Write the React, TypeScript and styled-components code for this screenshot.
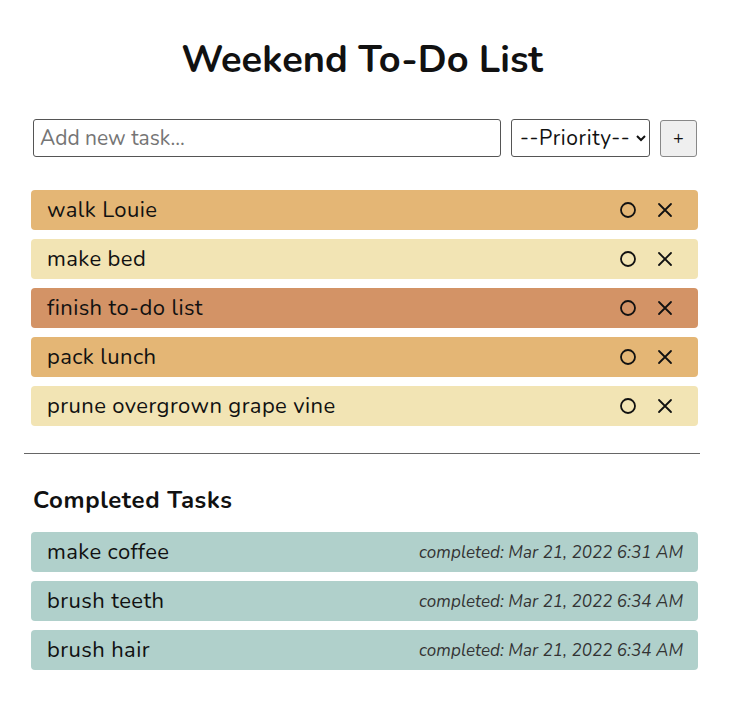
import React from "react";
import styled, { createGlobalStyle } from "styled-components";

const Global = createGlobalStyle`
  html, body { margin: 0; padding: 0; background: #fff; }
  body { font-family: "Nunito", "Lato", "Open Sans", sans-serif; color: #111; }
`;

const Page = styled.main`
  width: 676px;
  margin: 0 0 0 24px;
  padding-top: 38px;
`;

const Title = styled.h1`
  margin: 0 0 37px;
  text-align: center;
  font-size: 38px;
  font-weight: 700;
  line-height: 44px;
`;

const Form = styled.form`
  display: flex;
  align-items: center;
  gap: 10px;
  padding: 0 3px 0 9px;
  margin-bottom: 33px;
`;

const TextInput = styled.input`
  flex: 1;
  height: 38px;
  box-sizing: border-box;
  border: 1px solid #555;
  border-radius: 3px;
  padding: 0 6px;
  font-family: inherit;
  font-size: 21px;
  color: #111;
  &::placeholder { color: #757575; }
`;

const Select = styled.select`
  width: 139px;
  height: 38px;
  box-sizing: border-box;
  border: 1px solid #555;
  border-radius: 3px;
  padding: 0 0 0 4px;
  background: #fff;
  font-family: inherit;
  font-size: 21px;
  letter-spacing: 0.6px;
  color: #111;
`;

const AddButton = styled.button`
  width: 37px;
  height: 37px;
  box-sizing: border-box;
  border: 1px solid #888;
  border-radius: 3px;
  background: #efefef;
  font-family: inherit;
  font-size: 18px;
  color: #111;
  padding: 0;
`;

const List = styled.ul`
  list-style: none;
  margin: 0;
  padding: 0 2px 0 7px;
  display: flex;
  flex-direction: column;
  gap: 9px;
`;

const Row = styled.li<{ $bg: string }>`
  display: flex;
  align-items: center;
  height: 40px;
  box-sizing: border-box;
  padding: 0 22px 0 16px;
  border-radius: 4px;
  background: ${(p) => p.$bg};
  font-size: 22px;
  letter-spacing: 0.4px;
`;

const DoneRow = styled(Row)`
  padding-right: 15px;
`;

const TaskName = styled.span`
  flex: 1;
`;

const IconButton = styled.button`
  width: 22px;
  height: 22px;
  padding: 0;
  border: none;
  background: transparent;
  display: flex;
  align-items: center;
  justify-content: center;
  color: #111;
  margin-left: 15px;
`;

const Divider = styled.hr`
  border: none;
  border-top: 1px solid #666;
  margin: 27px 0 0;
`;

const SubTitle = styled.h2`
  margin: 31px 0 17px 9px;
  font-size: 24px;
  font-weight: 700;
  line-height: 30px;
  letter-spacing: 0.6px;
`;

const Stamp = styled.span`
  font-style: italic;
  font-size: 17px;
  letter-spacing: 0.05px;
  color: #333;
`;

const CircleIcon = () => (
  <svg width="18" height="18" viewBox="0 0 18 18" fill="none" stroke="currentColor" strokeWidth="1.8">
    <circle cx="9" cy="9" r="7" />
  </svg>
);

const XIcon = () => (
  <svg width="18" height="18" viewBox="0 0 18 18" fill="none" stroke="currentColor" strokeWidth="1.8" strokeLinecap="round">
    <path d="M3 3 L15 15 M15 3 L3 15" />
  </svg>
);

const tasks = [
  { name: "walk Louie", bg: "#e4b675" },
  { name: "make bed", bg: "#f2e4b4" },
  { name: "finish to-do list", bg: "#d39366" },
  { name: "pack lunch", bg: "#e4b675" },
  { name: "prune overgrown grape vine", bg: "#f2e4b4" },
];

const done = [
  { name: "make coffee", when: "Mar 21, 2022 6:31 AM" },
  { name: "brush teeth", when: "Mar 21, 2022 6:34 AM" },
  { name: "brush hair", when: "Mar 21, 2022 6:34 AM" },
];

export default function App() {
  return (
    <>
      <Global />
      <Page>
        <Title>Weekend To-Do List</Title>
        <Form onSubmit={(e) => e.preventDefault()}>
          <TextInput placeholder="Add new task..." />
          <Select defaultValue="">
            <option value="">--Priority--</option>
            <option value="high">High</option>
            <option value="medium">Medium</option>
            <option value="low">Low</option>
          </Select>
          <AddButton type="submit">+</AddButton>
        </Form>
        <List>
          {tasks.map((t) => (
            <Row key={t.name} $bg={t.bg}>
              <TaskName>{t.name}</TaskName>
              <IconButton aria-label="complete"><CircleIcon /></IconButton>
              <IconButton aria-label="delete"><XIcon /></IconButton>
            </Row>
          ))}
        </List>
        <Divider />
        <SubTitle>Completed Tasks</SubTitle>
        <List>
          {done.map((t) => (
            <DoneRow key={t.name} $bg="#b0d0cb">
              <TaskName>{t.name}</TaskName>
              <Stamp>completed: {t.when}</Stamp>
            </DoneRow>
          ))}
        </List>
      </Page>
    </>
  );
}
